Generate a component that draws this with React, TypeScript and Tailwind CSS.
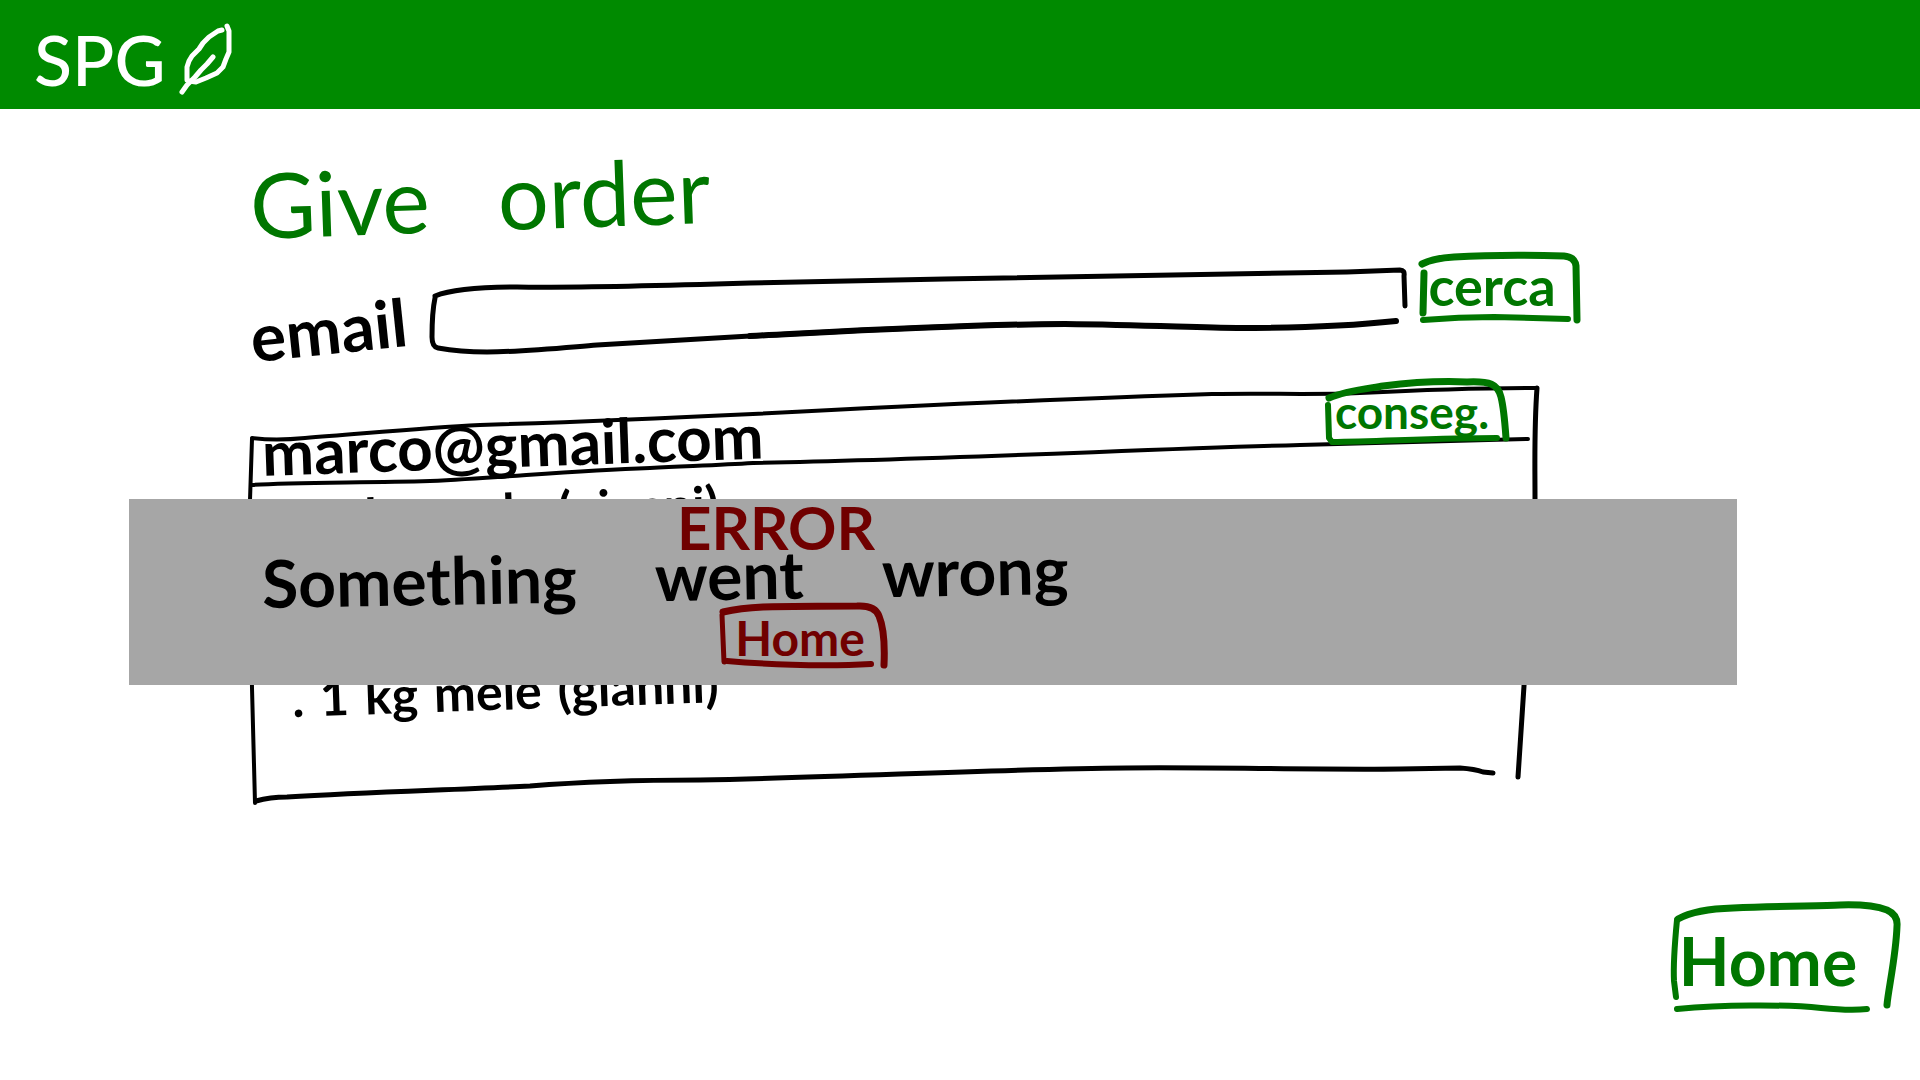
import type { ReactNode } from "react";

type Stroke = { d: string; w: number };

type SketchProps = { width: number; height: number; strokes: Stroke[] };

/* Hand-drawn pen strokes stretched over the box that holds them. */
function Sketch({ width, height, strokes }: SketchProps) {
  return (
    <svg
      className="pointer-events-none absolute inset-0 h-full w-full overflow-visible"
      viewBox={`0 0 ${width} ${height}`}
      preserveAspectRatio="none"
      fill="none"
      stroke="currentColor"
      strokeLinecap="round"
      strokeLinejoin="round"
      aria-hidden="true"
    >
      {strokes.map((s) => (
        <path key={s.d} d={s.d} strokeWidth={s.w} vectorEffect="non-scaling-stroke" />
      ))}
    </svg>
  );
}

const inputFrame: Stroke[] = [
  { d: "M5 44 C20 38 50 35 87 35 C150 36 220 34 320 31 C520 26 740 24 917 20 L970 18 Q975 18 974 24 L975 54", w: 5 },
  { d: "M5 46 Q2 60 2 85 Q2 95 8 96 Q30 100 57 100 C90 100 130 96 167 93 C240 89 280 86 320 84 C420 79 540 72 635 72", w: 5 },
  { d: "M320 84 C420 79 540 72 635 72 C720 73 770 76 807 76 C870 76 920 74 966 69", w: 6 },
];

const searchFrame: Stroke[] = [
  { d: "M3 12 Q15 6 35 5 C70 3 110 3 145 4 Q156 5 157 14 L158 68", w: 7 },
  { d: "M5 21 L4 61", w: 7 },
  { d: "M4 68 Q40 65 75 65 L149 67", w: 6 },
];

const deliverFrame: Stroke[] = [
  { d: "M4 19 C20 12 40 10 58 7 C90 3 120 2 142 3 C165 2 173 5 176 18 C179 30 180 45 181 59", w: 7 },
  { d: "M3 26 L4 59 L7 63 C60 62 120 59 172 59", w: 6 },
];

const panelFrame: Stroke[] = [
  { d: "M2 59 Q25 62 55 59 C110 55 170 49 230 46 C330 43 420 39 503 35 C620 29 800 20 962 15 C1020 14 1060 16 1110 14 C1170 11 1230 9 1286 9", w: 4 },
  { d: "M2 60 L0 121 C0 200 1 260 2 309 L5 424", w: 4 },
  { d: "M2 106 C40 103 110 104 180 102 C260 98 320 92 400 89 C440 87 470 86 503 84 C700 80 900 70 1050 66 L1278 60", w: 4 },
  { d: "M1287 9 C1284 50 1285 80 1285 121 L1274 307 L1268 398", w: 5 },
  { d: "M6 422 Q20 418 37 418 C120 413 200 411 280 407 C330 403 390 401 450 401 C600 398 750 390 876 389 C960 388 1060 391 1150 390 L1210 389 Q1225 390 1233 393 L1243 394", w: 5 },
];

const errorHomeFrame: Stroke[] = [
  { d: "M3 9 Q20 5 43 4 C80 3 120 3 137 3 Q155 2 159 13 C164 25 165 40 164 62", w: 7 },
  { d: "M2 12 L4 59", w: 5 },
  { d: "M7 58 C40 61 100 64 151 61", w: 6 },
];

const homeFrame: Stroke[] = [
  { d: "M7 18 Q25 8 62 7 C110 5 150 5 169 4 Q200 3 216 9 Q227 14 226 25 C225 55 217 90 216 104", w: 7 },
  { d: "M6 19 Q2 60 3 80 L5 96", w: 6 },
  { d: "M6 108 C50 104 110 103 150 107 Q180 110 196 108", w: 6 },
];

function Leaf() {
  return (
    <svg
      className="h-[72px] w-14"
      viewBox="0 0 56 72"
      fill="none"
      stroke="currentColor"
      strokeWidth="5"
      strokeLinecap="round"
      strokeLinejoin="round"
      aria-hidden="true"
    >
      <path d="M49 3 L51 8 L51 29 L48 36 L45 44 L39 50 L28 55 L18 59 L11 58" />
      <path d="M44 7 L40 8 L31 14 L25 20 L21 26 L14 33 L11 38 L9 44 L9 57" />
      <path d="M35 34 L29 41 L23 47 L17 54 L9 62 L4 69" />
    </svg>
  );
}

function OrderLine({ children }: { children: ReactNode }) {
  return (
    <li className="flex origin-left -rotate-2 items-baseline gap-4 text-[50px] leading-[50px]">
      <span aria-hidden="true">.</span>
      {children}
    </li>
  );
}

export default function App() {
  return (
    <div className="min-h-screen bg-white font-['Lato','Noto_Sans',sans-serif] font-bold text-black">
      <header className="flex h-[109px] items-center gap-3 bg-[#008a00] px-[34px] pt-2 text-white">
        <span className="text-[70px] leading-[80px] font-medium">SPG</span>
        <Leaf />
      </header>

      <main className="relative flex flex-col pt-[47px] pl-[250px]">
        <h1 className="flex origin-left -rotate-2 gap-[68px] text-[90px] leading-[96px] font-normal text-[#007600]">
          <span>Give</span>
          <span>order</span>
        </h1>

        <form className="mr-[339px] flex items-start" onSubmit={(e) => e.preventDefault()}>
          <label
            htmlFor="email"
            className="mt-10 w-[180px] shrink-0 -rotate-6 text-[66px] leading-[72px]"
          >
            email
          </label>
          <div className="relative h-[104px] min-w-0 flex-1">
            <Sketch width={975} height={104} strokes={inputFrame} />
            <input
              id="email"
              type="email"
              className="mt-9 h-12 w-full bg-transparent px-6 text-3xl outline-none"
            />
          </div>
          <button
            type="submit"
            className="relative ml-[14px] h-[72px] w-[162px] pr-4 pb-1 text-[54px] leading-[60px] text-[#007600]"
          >
            <Sketch width={162} height={72} strokes={searchFrame} />
            cerca
          </button>
        </form>

        <section className="relative mt-[15px] mr-[380px] h-[426px]">
          <Sketch width={1290} height={426} strokes={panelFrame} />
          <div className="flex items-start justify-between pr-[29px] pl-3">
            <h2 className="mt-[44px] origin-left -rotate-2 text-[62px] leading-[58px]">
              marco@gmail.com
            </h2>
            <button
              type="button"
              className="relative h-[66px] w-[186px] pr-3 text-[46px] leading-[52px] text-[#007600]"
            >
              <Sketch width={186} height={66} strokes={deliverFrame} />
              conseg.
            </button>
          </div>
          <ul className="mt-3 flex flex-col gap-[130px] pl-[42px]">
            <OrderLine>
              <span>1</span>
              <span>kg</span>
              <span>mele</span>
              <span>(gianni)</span>
            </OrderLine>
            <OrderLine>
              <span>1</span>
              <span>kg</span>
              <span>mele</span>
              <span>(gianni)</span>
            </OrderLine>
          </ul>
        </section>

        <button
          type="button"
          className="relative mt-24 mr-[19px] h-28 w-[230px] self-end pt-2 pr-9 text-[66px] leading-[80px] text-[#007600]"
        >
          <Sketch width={230} height={112} strokes={homeFrame} />
          Home
        </button>

        <div
          role="alertdialog"
          aria-labelledby="error-title"
          aria-describedby="error-text"
          className="absolute top-[390px] right-[183px] left-[129px] h-[186px] bg-[#a6a6a6] pl-[133px]"
        >
          <h2
            id="error-title"
            className="ml-[415px] text-[60px] leading-[56px] text-[#700000]"
          >
            ERROR
          </h2>
          <p
            id="error-text"
            className="flex origin-left -rotate-1 gap-[78px] text-[66px] leading-[56px]"
          >
            <span>Something</span>
            <span>went</span>
            <span>wrong</span>
          </p>
          <button
            type="button"
            className="relative -mt-2 ml-[458px] block h-[70px] w-[168px] pr-2 text-[48px] leading-[48px] text-[#700000]"
          >
            <Sketch width={168} height={70} strokes={errorHomeFrame} />
            Home
          </button>
        </div>
      </main>
    </div>
  );
}
